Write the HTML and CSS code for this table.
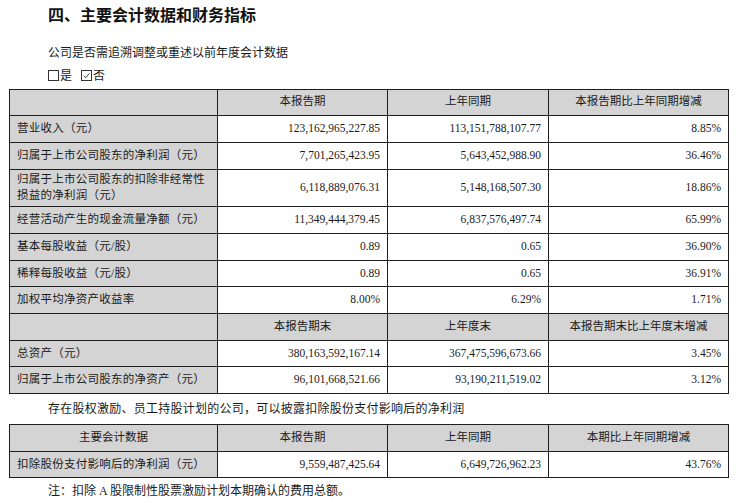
FILE: index.html
```html
<!DOCTYPE html>
<html lang="zh-CN">
<head>
<meta charset="utf-8">
<link rel="stylesheet" href="styles.css">
</head>
<body>
<div class="page">
  <h1 class="title">四、主要会计数据和财务指标</h1>
  <p class="para para-first">公司是否需追溯调整或重述以前年度会计数据</p>
  <p class="para"><span class="box"></span>是 <span class="box box-checked"><svg viewBox="0 0 10 10" width="10" height="10"><path d="M2 5.2 L4.2 7.4 L8.2 2.6" fill="none" stroke="#222" stroke-width="1"/></svg></span>否</p>

  <table class="data data-main">
    <colgroup><col class="c1"><col class="c2"><col class="c3"><col class="c4"></colgroup>
    <tr class="head"><td></td><td>本报告期</td><td>上年同期</td><td>本报告期比上年同期增减</td></tr>
    <tr><td class="lab">营业收入（元）</td><td class="num">123,162,965,227.85</td><td class="num">113,151,788,107.77</td><td class="num">8.85%</td></tr>
    <tr><td class="lab">归属于上市公司股东的净利润（元）</td><td class="num">7,701,265,423.95</td><td class="num">5,643,452,988.90</td><td class="num">36.46%</td></tr>
    <tr class="tall"><td class="lab">归属于上市公司股东的扣除非经常性损益的净利润（元）</td><td class="num">6,118,889,076.31</td><td class="num">5,148,168,507.30</td><td class="num">18.86%</td></tr>
    <tr><td class="lab">经营活动产生的现金流量净额（元）</td><td class="num">11,349,444,379.45</td><td class="num">6,837,576,497.74</td><td class="num">65.99%</td></tr>
    <tr><td class="lab">基本每股收益（元/股）</td><td class="num">0.89</td><td class="num">0.65</td><td class="num">36.90%</td></tr>
    <tr><td class="lab">稀释每股收益（元/股）</td><td class="num">0.89</td><td class="num">0.65</td><td class="num">36.91%</td></tr>
    <tr><td class="lab">加权平均净资产收益率</td><td class="num">8.00%</td><td class="num">6.29%</td><td class="num">1.71%</td></tr>
    <tr class="head"><td></td><td>本报告期末</td><td>上年度末</td><td>本报告期末比上年度末增减</td></tr>
    <tr><td class="lab">总资产（元）</td><td class="num">380,163,592,167.14</td><td class="num">367,475,596,673.66</td><td class="num">3.45%</td></tr>
    <tr><td class="lab">归属于上市公司股东的净资产（元）</td><td class="num">96,101,668,521.66</td><td class="num">93,190,211,519.02</td><td class="num">3.12%</td></tr>
  </table>

  <p class="para para-mid">存在股权激励、员工持股计划的公司，可以披露扣除股份支付影响后的净利润</p>

  <table class="data data-second">
    <colgroup><col class="c1"><col class="c2"><col class="c3"><col class="c4"></colgroup>
    <tr class="head"><td>主要会计数据</td><td>本报告期</td><td>上年同期</td><td>本期比上年同期增减</td></tr>
    <tr><td class="lab">扣除股份支付影响后的净利润（元）</td><td class="num">9,559,487,425.64</td><td class="num">6,649,726,962.23</td><td class="num">43.76%</td></tr>
  </table>

  <p class="para para-note">注：扣除 A 股限制性股票激励计划本期确认的费用总额。</p>
</div>
</body>
</html>
```

FILE: styles.css
```css
html, body {
  margin: 0;
  padding: 0;
  background: #ffffff;
}

.page {
  width: 736px;
  height: 503px;
  overflow: hidden;
  color: #1a1a1a;
  font-family: "Liberation Serif", "Noto Sans CJK SC", serif;
  font-size: 11.5px;
}

.title {
  margin: 4px 0 0 48px;
  height: 20px;
  line-height: 20px;
  font-family: "Noto Sans CJK SC", sans-serif;
  font-size: 16px;
  font-weight: 700;
  color: #111;
}

.para {
  margin: 0 0 0 48px;
  line-height: 23px;
  height: 23px;
  font-size: 12px;
  white-space: nowrap;
}

.para-first {
  margin-top: 18px;
}

.box {
  display: inline-block;
  width: 9px;
  height: 9px;
  border: 1px solid #333;
  vertical-align: -1px;
  margin-right: 1px;
}

.box-checked {
  margin-left: 6px;
}

.box svg {
  display: block;
  width: 9px;
  height: 9px;
}

.data {
  border-collapse: collapse;
  table-layout: fixed;
  width: 719px;
  margin-left: 9px;
  border: 1px solid #222;
}

.data-main {
  margin-top: 0.5px;
}

.c1 { width: 208px; }
.c2 { width: 170px; }
.c3 { width: 161px; }
.c4 { width: 180px; }

.data td {
  border: 1px solid #1e1e1e;
  height: 26.7px;
  padding: 0 7px;
  box-sizing: border-box;
  line-height: 15.7px;
  vertical-align: middle;
  white-space: nowrap;
}

.data .tall td {
  height: 37.6px;
  white-space: normal;
}

.head td {
  background: #d4d4d4;
  text-align: center;
}

.data td.lab {
  background: #d4d4d4;
  text-align: left;
  letter-spacing: 0.25px;
}

.data td.num {
  text-align: right;
}

.para-mid {
  margin-top: 4px;
  height: 26px;
  line-height: 22px;
  letter-spacing: 0.25px;
}

.para-note {
  margin-top: 2px;
  line-height: 22px;
}
```
